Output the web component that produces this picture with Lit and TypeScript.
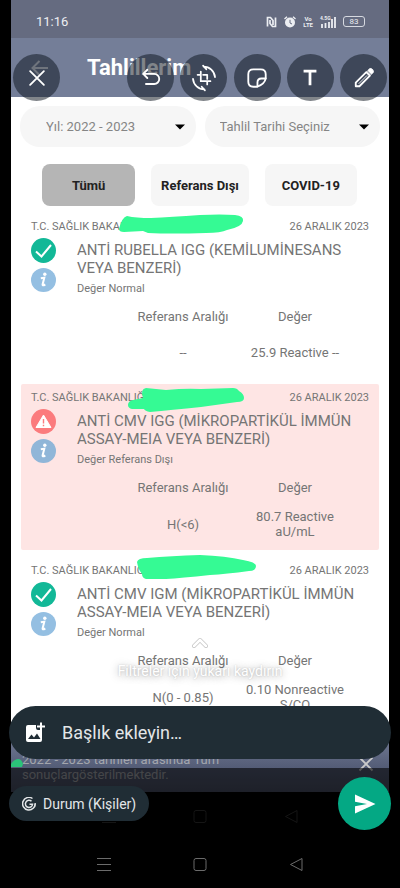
import { LitElement, html, css, svg } from "lit";
import { customElement, property } from "lit/decorators.js";

interface Result {
  org: string;
  date: string;
  title: string;
  note: string;
  range: string;
  value: string;
  alert: boolean;
  scribble: string;
}

const RESULTS: Result[] = [
  {
    org: "T.C. SAĞLIK BAKANLIĞI",
    date: "26 ARALIK 2023",
    title: "ANTİ RUBELLA IGG (KEMİLUMİNESANS VEYA BENZERİ)",
    note: "Değer Normal",
    range: "--",
    value: "25.9 Reactive --",
    alert: false,
    scribble:
      "M98 16Q101 4 106 3Q115 5 130 5Q150 4 179 2Q200 1 214 2Q223 3 222 8Q221 14 206 17Q200 20 185 20Q150 21 127 20L122 18L103 19Q98 19 98 16Z",
  },
  {
    org: "T.C. SAĞLIK BAKANLIĞI",
    date: "26 ARALIK 2023",
    title: "ANTİ CMV IGG (MİKROPARTİKÜL İMMÜN ASSAY-MEIA VEYA BENZERİ)",
    note: "Değer Referans Dışı",
    range: "H(<6)",
    value: "80.7 Reactive aU/mL",
    alert: true,
    scribble:
      "M107 21Q107 17 112 16L122 14Q119 5 125 4Q135 5 145 6Q165 4 180 5L212 4Q216 4 218 7Q223 10 223 14Q223 18 216 18L180 23Q150 26 129 28Q124 27 123 25L111 25Q107 24 107 21Z",
  },
  {
    org: "T.C. SAĞLIK BAKANLIĞI",
    date: "26 ARALIK 2023",
    title: "ANTİ CMV IGM (MİKROPARTİKÜL İMMÜN ASSAY-MEIA VEYA BENZERİ)",
    note: "Değer Normal",
    range: "N(0 - 0.85)",
    value: "0.10 Nonreactive S/CO",
    alert: false,
    scribble:
      "M116 5Q117 1 126 1Q150 -1 179 -2Q205 -1 222 3Q235 5 235 9Q235 14 228 14Q205 17 189 18Q160 21 145 22L125 22Q121 21 121 17Q117 12 116 5Z",
  },
];

const checkIcon = svg`<circle cx="12.5" cy="12.5" r="12.5" fill="#12b897"/>
  <path d="M5 13.500L10.500 18.500L20 7" fill="none" stroke="#fff" stroke-width="2"/>`;

const alertIcon = svg`<circle cx="12.5" cy="12.5" r="12.5" fill="#fb7b7d"/>
  <path d="M12.500 6L20 18.500H5Z" fill="#fff" stroke="#fff" stroke-linejoin="round"/>
  <path d="M12.500 10V14.500M12.500 15.800V17.300" stroke="#fb7b7d" stroke-width="1.400"/>`;

const infoIcon = (fill: string) => svg`<ellipse cx="12.5" cy="12" rx="12.5" ry="12" fill="${fill}"/>
  <circle cx="13.800" cy="6.300" r="1.700" fill="#fff"/>
  <path d="M9.800 10.300L13.300 9.700L11.600 16.500Q11.500 18 14.300 16.500" fill="none" stroke="#fff" stroke-width="2"/>`;

@customElement("result-card")
class ResultCard extends LitElement {
  @property({ attribute: false }) item!: Result;

  static styles = css`
    :host { display: block; color: #757575; }
    .card { position: relative; padding: 7px 10px 11px; border-radius: 2px; }
    .alert { background: #fee5e4; }
    .top { display: flex; justify-content: space-between; font-size: 11px; line-height: 14px; }
    .body { display: flex; gap: 21px; margin-top: 4px; }
    .icons { display: flex; flex-direction: column; gap: 5px; flex: none; }
    .icons svg { display: block; width: 25px; height: 25px; }
    .title { margin: 3px 0 5px; font-size: 15px; line-height: 18px; font-weight: 400; }
    .note { margin: 0; font-size: 11px; line-height: 14px; }
    .values { margin: 13px 18px 0 96px; }
    table { width: 100%; table-layout: fixed; border-collapse: collapse; font-size: 13px; line-height: 15px; text-align: center; }
    th { padding: 0; font-weight: 400; white-space: nowrap; }
    td { padding: 14px 3px 0; height: 28px; vertical-align: middle; }
    .scribble { position: absolute; left: 0; top: 0; width: 240px; height: 30px; overflow: visible; }
  `;

  render() {
    const r = this.item;
    return html`<article class="card ${r.alert ? "alert" : ""}">
      <div class="top"><span>${r.org}</span><time>${r.date}</time></div>
      <div class="body">
        <div class="icons">
          <svg viewBox="0 0 25 25">${r.alert ? alertIcon : checkIcon}</svg>
          <svg viewBox="0 0 25 25">${infoIcon(r.alert ? "#90b6d8" : "#94bfe2")}</svg>
        </div>
        <div>
          <h2 class="title">${r.title}</h2>
          <p class="note">${r.note}</p>
        </div>
      </div>
      <div class="values">
        <table>
          <thead><tr><th scope="col">Referans Aralığı</th><th scope="col">Değer</th></tr></thead>
          <tbody><tr><td>${r.range}</td><td>${r.value}</td></tr></tbody>
        </table>
      </div>
      <svg class="scribble" viewBox="0 0 240 30" aria-hidden="true"><path d=${r.scribble} fill="#35fa94" /></svg>
    </article>`;
  }
}

@customElement("android-nav")
class AndroidNav extends LitElement {
  static styles = css`
    :host { display: flex; justify-content: space-around; align-items: center; height: 48px; padding: 0 14%; color: #6b6b6b; }
    button { display: flex; padding: 0; border: 0; background: none; color: inherit; }
    svg { width: 16px; height: 16px; fill: none; stroke: currentColor; }
  `;
  render() {
    return html`
      <button aria-label="Menü"><svg viewBox="0 0 16 16"><path d="M1 2.500H15M1 8.500H15M1 14.500H15" /></svg></button>
      <button aria-label="Ana ekran"><svg viewBox="0 0 16 16"><rect x="2" y="2.500" width="12" height="12" rx="2" /></svg></button>
      <button aria-label="Geri"><svg viewBox="0 0 16 16"><path d="M14 2.500V14.500L2.500 8.500Z" stroke-linejoin="round" /></svg></button>
    `;
  }
}

const TOOLS = [
  {
    label: "Geri al",
    icon: svg`<path d="M8 3L3.500 7.500L8 12M4 7.500H15.500A5.500 5.500 0 0 1 15.500 18.500H6.500"/>`,
  },
  {
    label: "Kırp ve döndür",
    icon: svg`<path d="M8.500 5V15.500H19M5 8.500H8.500M11 8.500H15.500V13M15.500 15.500V19" stroke-width="1.900"/>
      <path d="M11.500 -0.500A12.500 12.500 0 0 1 24 11M12.500 24.500A12.500 12.500 0 0 1 0 13M11 -1.500L14.500 2.500M13 25.500L9.500 21.500" stroke-width="1.900"/>`,
  },
  {
    label: "Çıkartma",
    icon: svg`<path d="M12.500 21.500H8Q2.500 21.500 2.500 16V8Q2.500 2.500 8 2.500H16Q21.500 2.500 21.500 8V12.500Q20.500 18.500 12.500 21.500Z"/>
      <path d="M12.500 21V17Q12.500 12.500 17 12.500H21.500"/>`,
  },
  {
    label: "Metin",
    icon: svg`<path d="M5 4.500H19M12 4.500V20" stroke-width="3" stroke-linecap="butt"/>`,
  },
  {
    label: "Çiz",
    icon: svg`<path d="M3 21V17L14.500 5.500L18.500 9.500L7 21Z"/><path d="M6.500 18L15 9.500" stroke-width="1"/>
      <path d="M16 4L18 2Q19.500 1 21 2.500Q23 4.500 22 6L20 8Z" fill="currentColor" stroke-width="1"/>`,
  },
];

@customElement("app-root")
class AppRoot extends LitElement {
  static styles = css`
    :host { display: block; position: relative; height: 100vh; min-height: 640px; overflow: hidden; background: #000; font-family: Roboto, "Noto Sans", sans-serif; }
    button { font-family: inherit; cursor: pointer; }
    .shot { display: flex; flex-direction: column; height: 100%; margin: 0 11px; }
    .status { flex: none; display: flex; align-items: center; justify-content: space-between; height: 38px; padding: 5px 24px 0 25px; box-sizing: border-box; background: #656b80; color: #eceef2; font-size: 13px; }
    .status-icons { display: flex; align-items: center; gap: 7px; }
    .status-icons svg { display: block; height: 12px; }
    .tiny { display: grid; font-size: 6px; line-height: 6px; font-weight: 700; text-align: center; }
    .signal { display: grid; justify-items: start; font-size: 5px; line-height: 5px; font-weight: 700; grid-template-areas: "a"; }
    .signal > * { grid-area: a; }
    .battery { border: 1px solid #d6d9e0; border-radius: 3px; width: 20px; font-size: 8px; line-height: 9px; text-align: center; }
    .appbar { flex: none; display: flex; align-items: center; gap: 38px; height: 59px; padding: 0 20px; box-sizing: border-box; background: #747e98; color: #fff; }
    .appbar svg { width: 18px; height: 18px; }
    .appbar h1 { margin: 0; font-size: 22px; line-height: 26px; font-weight: 700; }
    .page { flex: 1; min-height: 0; overflow: hidden; background: #fff; padding: 9px 9px 0; }
    .filters { display: grid; grid-template-columns: 1fr 1fr; gap: 9px; }
    .pick { display: grid; align-items: center; height: 41px; }
    .pick > * { grid-area: 1 / 1; }
    .pick select { appearance: none; width: 100%; height: 100%; border: 0; border-radius: 20px; background: #f6f6f6; color: #858585; font-family: inherit; font-size: 13px; padding: 0 32px 0 15px; }
    .pick .year { padding-left: 26px; }
    .pick svg { justify-self: end; width: 10px; height: 6px; margin-right: 11px; pointer-events: none; }
    .tabs { display: grid; grid-template-columns: 93fr 97fr 92fr; gap: 16px; margin: 17px 23px 7px 22px; }
    .tabs button { height: 42px; padding: 0; border: 0; border-radius: 8px; background: #f6f6f6; color: #222; font-size: 13px; font-weight: 700; white-space: nowrap; }
    .tabs .on { background: #b5b5b5; }
    .list { display: grid; gap: 7px; padding: 0 1px; }
    .toast { flex: none; position: relative; display: flex; justify-content: space-between; align-items: flex-start; height: 57px; padding: 17px 15px 0 11px; box-sizing: border-box; background: linear-gradient(#747c96, #525b75 60%, #484e63); color: #a3a6ad; }
    .toast p { margin: 0; max-width: 210px; font-size: 13px; line-height: 15px; }
    .toast button { padding: 4px 0 0; border: 0; background: none; color: #c9c9c9; }
    .toast button svg { display: block; width: 16px; height: 16px; }
    .blob { position: absolute; left: 0; top: 24px; width: 12px; height: 8px; }
    .shot android-nav { flex: none; color: #333; margin-bottom: 48px; }
    .editor { position: absolute; inset: 0; display: flex; flex-direction: column; color: #fff; }
    .tools { display: flex; justify-content: space-between; padding: 54px 13px 0; }
    .toolset { display: flex; justify-content: space-between; width: 260px; }
    .tool { display: grid; place-items: center; width: 47px; height: 47px; padding: 0; border: 0; border-radius: 50%; background: rgba(14, 22, 31, 0.52); color: #fff; }
    .tool svg { width: 22px; height: 22px; overflow: visible; fill: none; stroke: currentColor; stroke-width: 2; stroke-linecap: round; stroke-linejoin: round; }
    .hint { display: grid; justify-items: center; gap: 14px; margin: auto 0 27px; font-size: 14px; line-height: 16px; text-shadow: 0 0 2px rgba(0, 0, 0, 0.2), 0 1px 8px rgba(0, 0, 0, 0.4); }
    .hint svg { width: 18px; height: 12px; }
    .caption { display: flex; align-items: center; gap: 16px; height: 53px; margin: 0 9px 9px; padding: 0 15px; border-radius: 27px; background: #202d35; }
    .caption svg { flex: none; width: 22px; height: 22px; }
    .caption input { flex: 1; min-width: 0; border: 0; outline: 0; padding: 0; background: none; color: #fff; font-family: inherit; font-size: 18px; line-height: 22px; }
    .caption input::placeholder { color: #e3e6e8; opacity: 1; }
    .footer { background: rgba(0, 0, 0, 0.58); }
    .actions { display: flex; justify-content: space-between; align-items: center; padding: 9px 9px 10px; }
    .chip { display: flex; align-items: center; gap: 7px; height: 35px; padding: 0 13px; border: 0; border-radius: 18px; background: #202d35; color: #e3e6e8; font-size: 14px; }
    .chip svg { width: 14px; height: 14px; }
    .send { display: grid; place-items: center; width: 53px; height: 53px; padding: 0; border: 0; border-radius: 50%; background: #04a884; }
    .send svg { width: 22px; height: 20px; }
  `;

  render() {
    const arrow = html`<svg viewBox="0 0 10 6"><path d="M0 0.500H10L5 5.500Z" fill="#000" /></svg>`;
    return html`
      <main class="shot">
        <div class="status">
          <span>11:16</span>
          <div class="status-icons">
            <svg width="11" viewBox="0 0 11 12"><path d="M1.500 10.500V1.500H4.500L7 4.500V9M9.500 1.500V10.500H6.500L4 7.500V4" fill="none" stroke="#eceef2" stroke-width="1.700" /></svg>
            <svg width="12" viewBox="0 0 12 12"><circle cx="6" cy="6.500" r="5" fill="#eceef2" /><path d="M0.500 3L3 0.700M11.500 3L9 0.700" stroke="#eceef2" stroke-width="1.400" /><path d="M6 3.800V7L8 8" fill="none" stroke="#656b80" /></svg>
            <span class="tiny"><span>Vo</span><span>LTE</span></span>
            <span class="signal"><span>4.5G</span><svg width="16" viewBox="0 0 16 12"><path d="M2 12V8M5.500 12V7M9 12V6M12 12V3M15 12V1" stroke="#eceef2" stroke-width="1.800" /></svg></span>
            <span class="battery">83</span>
          </div>
        </div>
        <header class="appbar">
          <svg viewBox="0 0 18 18"><path d="M17 9H2M8.500 2L1.500 9L8.500 16" fill="none" stroke="#d9dce3" stroke-width="2" /></svg>
          <h1>Tahlillerim</h1>
        </header>
        <section class="page">
          <div class="filters">
            <div class="pick">
              <select class="year" aria-label="Yıl"><option>Yıl: 2022 - 2023</option></select>${arrow}
            </div>
            <div class="pick">
              <select aria-label="Tahlil Tarihi"><option>Tahlil Tarihi Seçiniz</option></select>${arrow}
            </div>
          </div>
          <div class="tabs">
            <button class="on">Tümü</button><button>Referans Dışı</button><button>COVID-19</button>
          </div>
          <div class="list">${RESULTS.map((r) => html`<result-card .item=${r}></result-card>`)}</div>
        </section>
        <div class="toast">
          <p>2022 - 2023 tarihleri arasında Tüm sonuçlargösterilmektedir.</p>
          <button aria-label="Kapat"><svg viewBox="0 0 16 16"><path d="M1.500 1.500L14.500 14.500M14.500 1.500L1.500 14.500" stroke="currentColor" stroke-width="1.800" /></svg></button>
          <svg class="blob" viewBox="0 0 12 8"><path d="M0 8V5Q3 0 8 0Q11 1 12 5L11 8Z" fill="#2bc279" /></svg>
        </div>
        <android-nav></android-nav>
      </main>
      <div class="editor">
        <div class="tools">
          <button class="tool" aria-label="Kapat"><svg viewBox="0 0 24 24"><path d="M4.500 4.500L19.500 19.500M19.500 4.500L4.500 19.500" /></svg></button>
          <div class="toolset">
            ${TOOLS.map((t) => html`<button class="tool" aria-label=${t.label}><svg viewBox="0 0 24 24">${t.icon}</svg></button>`)}
          </div>
        </div>
        <div class="hint">
          <svg viewBox="0 0 18 12"><g fill="none" stroke-linecap="round" stroke-linejoin="round"><path d="M3 9L9 3L15 9" stroke="#c4c4c4" stroke-width="4" /><path d="M3 9L9 3L15 9" stroke="#fff" stroke-width="2.500" /></g></svg>
          <span>Filtreler için yukarı kaydırın</span>
        </div>
        <div class="caption">
          <svg viewBox="0 0 22 22"><path d="M2 5Q2 3 4 3H12V6Q12 8 14 8H18V18Q18 20 16 20H4Q2 20 2 18Z" fill="#fff" /><path d="M4 17L7.500 12.500L10 15.500L13 11.500L16.500 17Z" fill="#202d35" /><path d="M17 0.500V8.500M13 4.500H21" stroke="#fff" stroke-width="2" /></svg>
          <input type="text" aria-label="Başlık" placeholder="Başlık ekleyin…" />
        </div>
        <div class="footer">
          <div class="actions">
            <button class="chip"><svg viewBox="0 0 14 14"><g fill="none" stroke="#e3e6e8" stroke-width="1.500"><path d="M10.500 1.500A6.300 6.300 0 1 0 13.200 6.200" /><path d="M12.800 9.500L13.200 6.200" stroke-width="1" /><path d="M9.500 4.300A3.600 3.600 0 1 0 10.600 7.200H7.500" /></g></svg>Durum (Kişiler)</button>
            <button class="send" aria-label="Gönder"><svg viewBox="0 0 22 20"><path d="M1 0.500L21.500 10L1 19.500V12.300L13 10L1 7.700Z" fill="#fff" /></svg></button>
          </div>
          <android-nav></android-nav>
        </div>
      </div>
    `;
  }
}
